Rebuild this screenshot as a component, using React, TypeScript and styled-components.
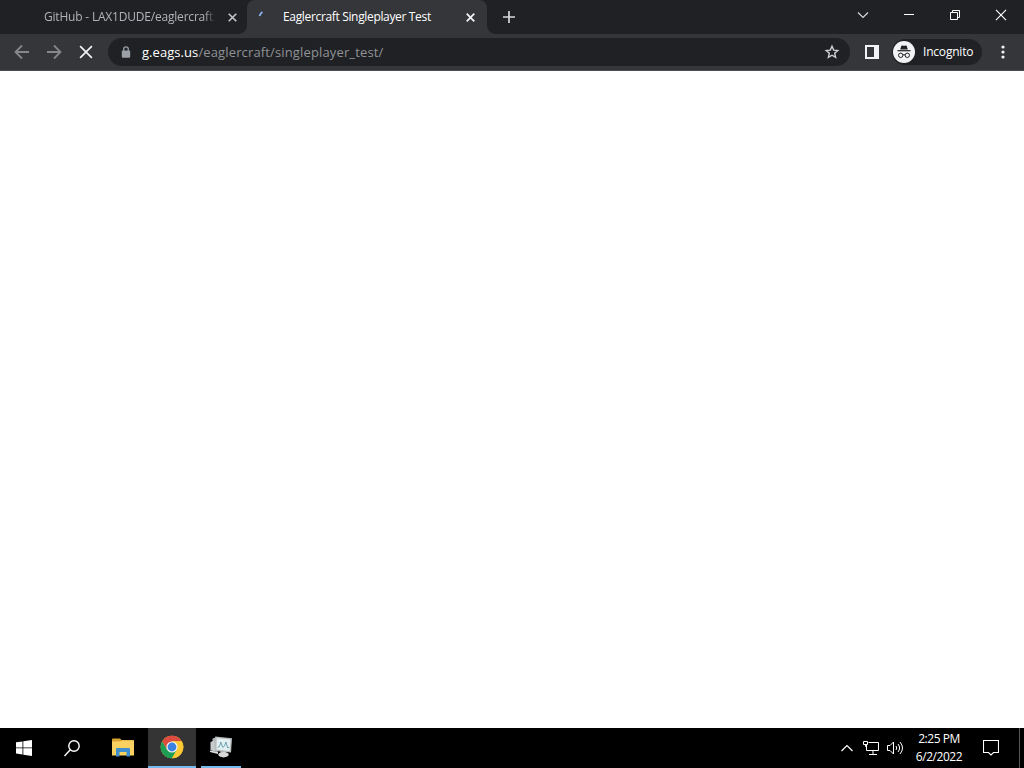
import React from 'react'
import styled, { createGlobalStyle } from 'styled-components'

const GlobalStyle = createGlobalStyle`
  * {
    box-sizing: border-box;
  }

  body {
    margin: 0;
    background: #fff;
    overflow: hidden;
    font-family: 'Open Sans', 'Noto Sans', sans-serif;
  }

  svg {
    display: block;
    flex-shrink: 0;
  }
`

const Screen = styled.div`
  display: flex;
  flex-direction: column;
  width: 1024px;
  height: 768px;
`

/* Tab strip */
const TabStrip = styled.div`
  display: flex;
  height: 34px;
  background: #202124;
`

const Tab = styled.div<{ $active?: boolean }>`
  position: relative;
  display: flex;
  align-items: center;
  width: ${({ $active }) => ($active ? 240 : 247)}px;
  height: 34px;
  padding-left: ${({ $active }) => ($active ? 9 : 44)}px;
  border-radius: 8px 8px 0 0;
  background: ${({ $active }) => ($active ? '#35363a' : 'transparent')};
  color: ${({ $active }) => ($active ? '#fff' : '#b0b3b8')};

  /* flared feet of the selected tab */
  &::before,
  &::after {
    content: '';
    display: ${({ $active }) => ($active ? 'block' : 'none')};
    position: absolute;
    bottom: 0;
    width: 8px;
    height: 8px;
  }

  &::before {
    left: -8px;
    background: radial-gradient(circle at 0 0, transparent 7.5px, #35363a 8px);
  }

  &::after {
    right: -8px;
    background: radial-gradient(circle at 100% 0, transparent 7.5px, #35363a 8px);
  }
`

const TabTitle = styled.div<{ $width: number; $spacing: number; $fade?: boolean }>`
  width: ${({ $width }) => $width}px;
  overflow: hidden;
  white-space: nowrap;
  font-size: 12px;
  line-height: 18px;
  letter-spacing: ${({ $spacing }) => $spacing}px;
  mask-image: ${({ $fade }) =>
    $fade ? 'linear-gradient(90deg, #000 calc(100% - 10px), transparent)' : 'none'};
`

const SpinnerSlot = styled.div`
  width: 27px;
  height: 16px;
`

const TabClose = styled.div<{ $offset: number }>`
  margin-left: ${({ $offset }) => $offset}px;
`

const NewTab = styled.div`
  display: flex;
  align-items: center;
  justify-content: center;
  width: 28px;
  margin-left: 8px;
  height: 34px;
`

const WindowControls = styled.div`
  display: flex;
  margin-left: auto;
`

const WindowButton = styled.div`
  display: flex;
  align-items: center;
  justify-content: center;
  width: 46px;
  height: 29px;
`

/* Toolbar */
const Toolbar = styled.div`
  display: flex;
  align-items: center;
  height: 37px;
  padding: 0 5px 1px 6px;
  background: #35363a;
  border-bottom: 1px solid #4b4c4f;
`

const NavButton = styled.div`
  display: flex;
  align-items: center;
  justify-content: center;
  width: 32px;
  height: 28px;
`

const AddressBar = styled.div`
  display: flex;
  align-items: center;
  width: 742px;
  height: 28px;
  margin-left: 6px;
  padding: 0 10px 0 12px;
  border-radius: 14px;
  background: #202124;
`

const Address = styled.div`
  flex: 1;
  margin-left: 10px;
  color: #8f9297;
  font-size: 13px;
  line-height: 18px;
  letter-spacing: 0.14px;
`

const Host = styled.span`
  color: #fff;
  letter-spacing: 0.06px;
`

const SidePanel = styled.div`
  margin-left: 15px;
`

const Profile = styled.div`
  display: flex;
  align-items: center;
  width: 90px;
  height: 26px;
  margin-left: 13px;
  padding-left: 1px;
  border-radius: 13px;
  background: #202124;
`

const ProfileName = styled.span`
  margin-left: 8px;
  color: #fff;
  font-size: 12px;
  line-height: 16px;
  letter-spacing: -0.2px;
`

const MenuButton = styled.div`
  margin-left: 18.5px;
`

const Page = styled.main`
  flex: 1;
  background: #fff;
`

/* Taskbar */
const Taskbar = styled.div`
  display: flex;
  height: 40px;
  background: #000;
`

const TaskButton = styled.div<{ $active?: boolean; $gap?: number }>`
  display: flex;
  align-items: center;
  justify-content: center;
  width: 48px;
  height: 40px;
  margin-left: ${({ $gap = 0 }) => $gap}px;
  background: ${({ $active }) => ($active ? '#343434' : 'transparent')};
  border-bottom: ${({ $active }) => ($active ? '2px solid #76b9ed' : 'none')};
`

const RunningButton = styled(TaskButton)`
  width: 40px;
  border-bottom: 2px solid #76b9ed;
`

const Tray = styled.div`
  display: flex;
  align-items: center;
  margin-left: auto;
`

const TrayIcon = styled.div`
  display: flex;
  align-items: center;
  justify-content: center;
  width: 24px;
  height: 40px;
`

const Clock = styled.div`
  width: 64px;
  color: #fff;
  font-size: 12px;
  line-height: 18px;
  letter-spacing: -0.45px;
  text-align: center;
`

const NotificationButton = styled.div`
  display: flex;
  align-items: center;
  justify-content: center;
  width: 40px;
  height: 40px;
`

const ShowDesktop = styled.div`
  width: 5px;
  height: 40px;
  margin-left: 8px;
  border-left: 1px solid #555;
`

const CloseIcon = ({ size, color, stroke }: { size: number; color: string; stroke: number }) => (
  <svg width={size} height={size} viewBox="0 0 10 10" stroke={color} strokeWidth={stroke}>
    <path d="M.8.8l8.4 8.4M9.2.8L.8 9.2" />
  </svg>
)

const ArrowIcon = ({ flip }: { flip?: boolean }) => (
  <svg width="16" height="16" viewBox="0 0 16 16" fill="none" stroke="#85878b" strokeWidth="1.8">
    <path d={flip ? 'M1 8h13M8 1.5L14.5 8 8 14.5' : 'M15 8H2M8 1.5L1.5 8 8 14.5'} />
  </svg>
)

const IncognitoIcon = () => (
  <svg width="22" height="22" viewBox="0 0 22 22">
    <circle cx="11" cy="11" r="11" fill="#f1f3f4" />
    <path
      d="M7.2 8.4l1.1-3.4c.2-.6.6-.7 1.1-.5.9.4 2.3.4 3.2 0 .5-.2.9-.1 1.1.5l1.1 3.4z"
      fill="#202124"
    />
    <path d="M4.5 9.7h13" stroke="#202124" strokeWidth="1.2" />
    <g fill="none" stroke="#202124" strokeWidth="1">
      <circle cx="7.7" cy="14.3" r="2.2" />
      <circle cx="14.3" cy="14.3" r="2.2" />
      <path d="M9.9 14.1q1.1-.8 2.2 0" />
    </g>
  </svg>
)

const FolderIcon = () => (
  <svg width="22" height="20" viewBox="0 0 22 20">
    <path d="M0 1.5Q0 .5 1 .5h7L9.500 2H21q1 0 1 1v3H0z" fill="#d9a334" />
    <path d="M0 3.5h8.5L10 2.500h12V17.500H0z" fill="#f9d161" />
    <path d="M4 18.500V11q0-1 1-1h12q1 0 1 1v7.500h-3.500V14h-7v4.500z" fill="#3f8fce" />
  </svg>
)

const ChromeIcon = () => (
  <svg width="24" height="24" viewBox="0 0 24 24">
    <circle cx="12" cy="12" r="11.3" fill="#fcc934" />
    <path d="M2.21 6.35A11.3 11.3 0 0 1 21.79 6.35H12L7.1 14.8z" fill="#dd4b3e" />
    <path d="M2.21 6.35A11.3 11.3 0 0 0 12 23.3L16.9 14.8H7.1z" fill="#1e9e54" />
    <path d="M12 6.35h9.79A11.3 11.3 0 0 1 12 23.3l4.9-8.5z" fill="#fcc934" />
    <circle cx="12" cy="12" r="5.6" fill="#f2f2f2" />
    <circle cx="12" cy="12" r="4.4" fill="#3b82e0" />
  </svg>
)

const MonitorIcon = () => (
  <svg width="24" height="22" viewBox="0 0 24 22">
    <path d="M3.5 2.5l5-1.5v15l-5-1z" fill="#b3b7b8" />
    <path d="M1.5 6l4-1.5v11l-4-1.5z" fill="#c9cccd" />
    <path d="M1 14.5l8 1.5v2l-8-2z" fill="#dfe1e1" />
    <path d="M11.500 15h5l1 4h-6z" fill="#aaadad" />
    <ellipse cx="14.5" cy="18.7" rx="5.2" ry="2.7" fill="#d8d9d8" />
    <path d="M6.2.5L23 2.2 22 16.5 6 15z" fill="#b9bebf" />
    <path d="M7.7 2.3l13.8 1.3-.9 11.3-13.1-1.3z" fill="#e6f0f2" />
    <path
      d="M8.500 11.500l2-1 1.300-4.500 2 5.500 1.700-1.500 1.500-4 1.700 6 1.500-1"
      fill="none"
      stroke="#5f9aad"
      strokeWidth=".9"
    />
  </svg>
)

const NetworkIcon = () => (
  <svg width="18" height="16" viewBox="0 0 18 16" fill="none" stroke="#fff">
    <path d="M6.5 2.5h10v8h-12V5M11 10.500v4M7 14.500h8" />
    <path d="M1.500 1.500h4v3h-4zM3.500 4.500v2h1" />
  </svg>
)

const SpeakerIcon = () => (
  <svg width="18" height="16" viewBox="0 0 18 16" fill="none" stroke="#fff">
    <path d="M1.5 5.5H4L7.5 2v12L4 10.5H1.5z" />
    <path d="M10 6q1.5 2 0 4M12 4q3.2 4 0 8M14 2q5 6 0 12" />
  </svg>
)

const App: React.FC = () => {
  return (
    <Screen>
      <GlobalStyle />

      <TabStrip>
        <Tab>
          <TabTitle $width={171} $spacing={-0.2} $fade>
            GitHub - LAX1DUDE/eaglercraft:
          </TabTitle>
          <TabClose $offset={12.5}>
            <CloseIcon size={9} color="#c4c6ca" stroke={1.8} />
          </TabClose>
        </Tab>
        <Tab $active>
          <SpinnerSlot>
            <svg width="16" height="16" viewBox="0 0 16 16">
              <path d="M3.5 7Q4.4 4.4 6.4 3" fill="none" stroke="#8ab4f8" strokeWidth="1.8" />
            </svg>
          </SpinnerSlot>
          <TabTitle $width={160} $spacing={-0.34}>
            Eaglercraft Singleplayer Test
          </TabTitle>
          <TabClose $offset={23}>
            <CloseIcon size={9} color="#f1f3f4" stroke={2} />
          </TabClose>
        </Tab>
        <NewTab>
          <svg width="12" height="12" viewBox="0 0 12 12" stroke="#d6d8db" strokeWidth="1.7">
            <path d="M6 0v12M0 6h12" />
          </svg>
        </NewTab>
        <WindowControls>
          <WindowButton>
            <svg width="12" height="8" viewBox="0 0 12 8" fill="none" stroke="#dadce0" strokeWidth="1.1">
              <path d="M1 1.5l5 5 5-5" />
            </svg>
          </WindowButton>
          <WindowButton>
            <svg width="10" height="1" viewBox="0 0 10 1">
              <path d="M0 0h10v1H0z" fill="#fff" />
            </svg>
          </WindowButton>
          <WindowButton>
            <svg width="10" height="11" viewBox="0 0 10 11" fill="none" stroke="#fff">
              <path d="M.5 3.5h7v7h-7zM2.5 3.5v-2h7v7h-2" />
            </svg>
          </WindowButton>
          <WindowButton>
            <CloseIcon size={12} color="#fff" stroke={0.95} />
          </WindowButton>
        </WindowControls>
      </TabStrip>

      <Toolbar>
        <NavButton>
          <ArrowIcon />
        </NavButton>
        <NavButton>
          <ArrowIcon flip />
        </NavButton>
        <NavButton>
          <CloseIcon size={14} color="#f1f3f4" stroke={1.2} />
        </NavButton>
        <AddressBar>
          <svg width="12" height="12" viewBox="0 0 12 12">
            <path d="M3.7 5V3.2a2.3 2.3 0 0 1 4.6 0V5" fill="none" stroke="#9aa0a6" strokeWidth="1.3" />
            <rect x="1.8" y="4.5" width="8.4" height="7.3" rx="1" fill="#9aa0a6" />
          </svg>
          <Address>
            <Host>g.eags.us</Host>/eaglercraft/singleplayer_test/
          </Address>
          <svg width="16" height="16" viewBox="0 0 16 16" fill="none" stroke="#d0d2d6" strokeWidth="1.4">
            <path d="M8 2.2l1.7 3.9 4.1.4-3.1 2.8.9 4.1L8 11.2l-3.6 2.2.9-4.1-3.1-2.8 4.1-.4z" />
          </svg>
        </AddressBar>
        <SidePanel>
          <svg width="14" height="14" viewBox="0 0 14 14">
            <path d="M0 0h14v14H0zM2 2v10h7V2z" fill="#f1f3f4" fillRule="evenodd" />
          </svg>
        </SidePanel>
        <Profile>
          <IncognitoIcon />
          <ProfileName>Incognito</ProfileName>
        </Profile>
        <MenuButton>
          <svg width="4" height="14" viewBox="0 0 4 14" fill="#f1f3f4">
            <circle cx="2" cy="2" r="1.6" />
            <circle cx="2" cy="7" r="1.6" />
            <circle cx="2" cy="12" r="1.6" />
          </svg>
        </MenuButton>
      </Toolbar>

      <Page />

      <Taskbar>
        <TaskButton>
          <svg width="16" height="16" viewBox="0 0 16 16" fill="#fff">
            <path d="M0 2.3l6.5-.9v6.1H0zM7.3 1.3L16 0v7.5H7.3zM0 8.3h6.5v6.2L0 13.6zM7.3 8.3H16V16l-8.7-1.3z" />
          </svg>
        </TaskButton>
        <TaskButton>
          <svg width="16" height="17" viewBox="0 0 16 17" fill="none" stroke="#fff" strokeWidth="1.4">
            <circle cx="10" cy="6" r="5.2" />
            <path d="M6.3 9.7L.5 16" />
          </svg>
        </TaskButton>
        <TaskButton $gap={3}>
          <FolderIcon />
        </TaskButton>
        <TaskButton $active $gap={1}>
          <ChromeIcon />
        </TaskButton>
        <RunningButton $gap={5}>
          <MonitorIcon />
        </RunningButton>

        <Tray>
          <TrayIcon>
            <svg width="12" height="8" viewBox="0 0 12 8" fill="none" stroke="#fff" strokeWidth="1.2">
              <path d="M.5 7L6 1.5 11.5 7" />
            </svg>
          </TrayIcon>
          <TrayIcon>
            <NetworkIcon />
          </TrayIcon>
          <TrayIcon>
            <SpeakerIcon />
          </TrayIcon>
          <Clock>
            <div>2:25 PM</div>
            <div>6/2/2022</div>
          </Clock>
          <NotificationButton>
            <svg width="16" height="16" viewBox="0 0 16 16" fill="none" stroke="#fff" strokeWidth="1.1">
              <path d="M.5.5h15v12h-5L8 15l-2.5-2.5h-5z" />
            </svg>
          </NotificationButton>
          <ShowDesktop />
        </Tray>
      </Taskbar>
    </Screen>
  )
}

export default App
